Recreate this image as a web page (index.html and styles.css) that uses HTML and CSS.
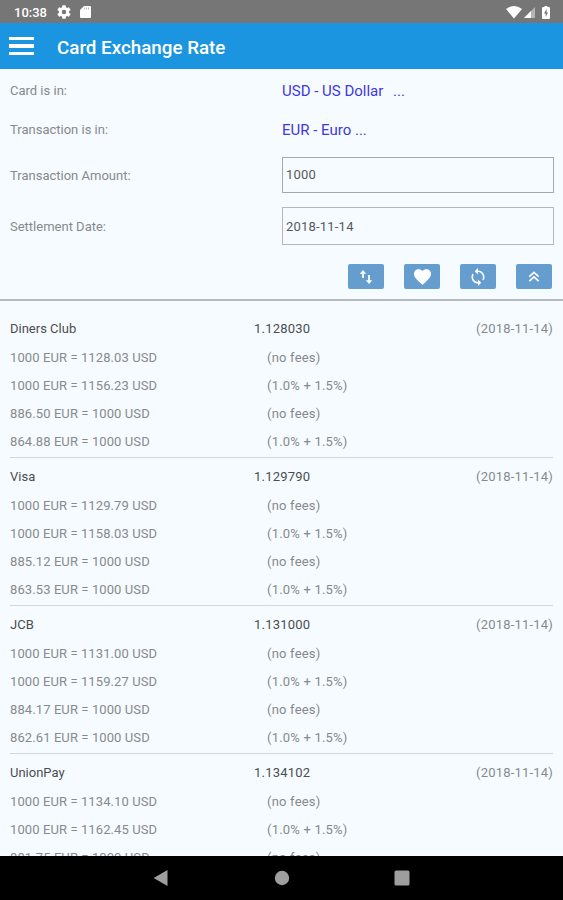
FILE: index.html
```
<!DOCTYPE html>
<html lang="en">
<head>
    <meta charset="UTF-8">
    <meta name="viewport" content="width=device-width, initial-scale=1.0">
    <title>Card Exchange Rate</title>
    <link rel="stylesheet" href="styles.css">
</head>
<body>
    <div class="status-bar">
        <span class="clock">10:38</span>
        <svg class="gear" width="14" height="14" viewBox="2 2 20 20"><path fill="#fff" d="M19.14 12.94c.04-.3.06-.61.06-.94s-.02-.64-.07-.94l2.03-1.58a.49.49 0 0 0 .12-.61l-1.92-3.32a.49.49 0 0 0-.59-.22l-2.39.96a7 7 0 0 0-1.62-.94l-.36-2.54A.48.48 0 0 0 13.92 2.4h-3.84a.48.48 0 0 0-.48.41l-.36 2.54a7 7 0 0 0-1.62.94l-2.39-.96a.49.49 0 0 0-.59.22L2.72 8.87a.48.48 0 0 0 .12.61l2.03 1.58a6 6 0 0 0 0 1.88l-2.03 1.58a.49.49 0 0 0-.12.61l1.92 3.32c.12.22.37.29.59.22l2.39-.96c.5.38 1.03.7 1.62.94l.36 2.54c.05.24.24.41.48.41h3.84c.24 0 .44-.17.48-.41l.36-2.54a7 7 0 0 0 1.62-.94l2.39.96c.22.08.47 0 .59-.22l1.92-3.32a.48.48 0 0 0-.12-.61zM12 15.1a3.1 3.1 0 1 1 0-6.2 3.1 3.1 0 0 1 0 6.2z"/></svg>
        <svg width="11" height="12" viewBox="0 0 11 12"><path fill="#fff" d="M4 0h6q1 0 1 1v10q0 1-1 1H1q-1 0-1-1V4z"/><path stroke="#aaa" stroke-width=".8" d="M4.5 1.5v2M6.5 1.5v2M8.5 1.5v2"/></svg>
        <div class="status-right">
            <svg width="16" height="13" viewBox="0 0 16 13"><path fill="#fff" d="M0 3Q8-3 16 3L8 12.5z"/></svg>
            <svg width="11" height="11" viewBox="0 0 11 11"><path fill="#b4b4b4" d="M0 11L11 0v11z"/><path fill="#fff" d="M0 11l7-7v7z"/></svg>
            <svg width="8" height="13" viewBox="0 0 8 13"><path fill="#fff" d="M2.5 0h3v1H7q1 0 1 1v10q0 1-1 1H1q-1 0-1-1V2q0-1 1-1h1.500z"/><path fill="#777" d="M4.600 3L2 7.500h1.600V11L6 6.500H4.600z"/></svg>
        </div>
    </div>

    <header class="app-bar">
        <button class="menu" aria-label="Menu"><span></span><span></span><span></span></button>
        <h1>Card Exchange Rate</h1>
    </header>

    <main class="content">
        <form class="settings">
            <div class="field">
                <label>Card is in:</label>
                <a class="currency">USD - US Dollar <span class="dots">...</span></a>
            </div>
            <div class="field">
                <label>Transaction is in:</label>
                <a class="currency">EUR - Euro ...</a>
            </div>
            <div class="field field-amount">
                <label for="amount">Transaction Amount:</label>
                <input id="amount" type="text" value="1000">
            </div>
            <div class="field field-date">
                <label for="date">Settlement Date:</label>
                <input id="date" type="text" value="2018-11-14">
            </div>
            <div class="actions">
                <button type="button" aria-label="Swap"><svg width="14" height="16" viewBox="0 0 14 16"><path fill="#fff" d="M4 1l3.200 3.700H4.900V9H3.100V4.700H.8zM10 15l-3.200-3.700h2.300V6h1.800v5.300h2.300z"/></svg></button>
                <button type="button" aria-label="Favorite"><svg width="17" height="16" viewBox="2 3 20 18.350"><path fill="#fff" d="M12 21.350l-1.450-1.320C5.400 15.360 2 12.280 2 8.500 2 5.420 4.420 3 7.500 3c1.740 0 3.410.81 4.500 2.090C13.090 3.810 14.760 3 16.500 3 19.580 3 22 5.420 22 8.500c0 3.780-3.400 6.860-8.550 11.540z"/></svg></button>
                <button type="button" aria-label="Refresh"><svg width="18" height="18" viewBox="1.500 1 21 22"><path fill="#fff" d="M12 4V1L8 5l4 4V6c3.310 0 6 2.690 6 6 0 1.010-.25 1.970-.7 2.800l1.460 1.460A7.930 7.930 0 0 0 20 12c0-4.420-3.580-8-8-8zm0 14c-3.310 0-6-2.690-6-6 0-1.010.25-1.970.7-2.800L5.240 7.740A7.930 7.930 0 0 0 4 12c0 4.420 3.580 8 8 8v3l4-4-4-4z"/></svg></button>
                <button type="button" aria-label="Collapse"><svg width="12" height="11" viewBox="0 0 12 11"><path fill="none" stroke="#fff" stroke-width="1.700" d="M1.300 5.700L6 1.400l4.700 4.300M1.300 10.200L6 5.900l4.700 4.300"/></svg></button>
            </div>
        </form>

        <section class="rates">
            <article class="rate">
                <div class="row head"><b>Diners Club</b><b class="value">1.128030</b><span class="date">(2018-11-14)</span></div>
                <div class="row"><span>1000 EUR = 1128.03 USD</span><span class="fee">(no fees)</span></div>
                <div class="row"><span>1000 EUR = 1156.23 USD</span><span class="fee">(1.0% + 1.5%)</span></div>
                <div class="row"><span>886.50 EUR = 1000 USD</span><span class="fee">(no fees)</span></div>
                <div class="row"><span>864.88 EUR = 1000 USD</span><span class="fee">(1.0% + 1.5%)</span></div>
            </article>
            <article class="rate">
                <div class="row head"><b>Visa</b><b class="value">1.129790</b><span class="date">(2018-11-14)</span></div>
                <div class="row"><span>1000 EUR = 1129.79 USD</span><span class="fee">(no fees)</span></div>
                <div class="row"><span>1000 EUR = 1158.03 USD</span><span class="fee">(1.0% + 1.5%)</span></div>
                <div class="row"><span>885.12 EUR = 1000 USD</span><span class="fee">(no fees)</span></div>
                <div class="row"><span>863.53 EUR = 1000 USD</span><span class="fee">(1.0% + 1.5%)</span></div>
            </article>
            <article class="rate">
                <div class="row head"><b>JCB</b><b class="value">1.131000</b><span class="date">(2018-11-14)</span></div>
                <div class="row"><span>1000 EUR = 1131.00 USD</span><span class="fee">(no fees)</span></div>
                <div class="row"><span>1000 EUR = 1159.27 USD</span><span class="fee">(1.0% + 1.5%)</span></div>
                <div class="row"><span>884.17 EUR = 1000 USD</span><span class="fee">(no fees)</span></div>
                <div class="row"><span>862.61 EUR = 1000 USD</span><span class="fee">(1.0% + 1.5%)</span></div>
            </article>
            <article class="rate">
                <div class="row head"><b>UnionPay</b><b class="value">1.134102</b><span class="date">(2018-11-14)</span></div>
                <div class="row"><span>1000 EUR = 1134.10 USD</span><span class="fee">(no fees)</span></div>
                <div class="row"><span>1000 EUR = 1162.45 USD</span><span class="fee">(1.0% + 1.5%)</span></div>
                <div class="row"><span>881.75 EUR = 1000 USD</span><span class="fee">(no fees)</span></div>
            </article>
        </section>
    </main>

    <nav class="nav-bar">
        <svg width="16" height="16" viewBox="0 0 16 16"><path fill="#9e9e9e" d="M13.500 0v16L-.5 8z"/></svg>
        <svg width="16" height="16" viewBox="0 0 16 16"><circle cx="8" cy="8" r="7.200" fill="#9e9e9e"/></svg>
        <svg width="16" height="16" viewBox="0 0 16 16"><rect x=".5" y=".5" width="15" height="15" rx="1.500" fill="#9e9e9e"/></svg>
    </nav>
</body>
</html>
```
FILE: styles.css
```
* {
    margin: 0;
    padding: 0;
    box-sizing: border-box;
}

body {
    height: 100vh;
    display: flex;
    flex-direction: column;
    overflow: hidden;
    background: #f6fbff;
    color: #868a8d;
    font-family: Roboto, sans-serif;
    font-size: 13px;
}

svg {
    display: block;
    flex-shrink: 0;
}

.status-bar {
    height: 23px;
    flex-shrink: 0;
    display: flex;
    align-items: center;
    padding: 1px 13px 0 14px;
    background: #767676;
    color: #fff;
}

.clock {
    width: 43px;
    font-weight: 500;
}

.gear {
    margin-right: 9px;
}

.status-right {
    margin-left: auto;
    display: flex;
    align-items: center;
    gap: 2px;
}

.status-right svg:last-child {
    margin-left: 5px;
}

.app-bar {
    height: 46px;
    flex-shrink: 0;
    display: flex;
    align-items: center;
    padding-left: 9px;
    background: #1b95df;
    color: #fff;
}

.app-bar h1 {
    margin-left: 23px;
    padding-top: 3px;
    font-size: 18.800px;
    font-weight: 500;
}

.menu {
    width: 25px;
    display: flex;
    flex-direction: column;
    gap: 4px;
    border: 0;
    background: none;
}

.menu span {
    height: 3.500px;
    background: #fff;
}

.content {
    flex: 1;
    min-height: 0;
    overflow: hidden;
}

.settings {
    height: 232px;
    padding: 2px 10px 0;
    border-bottom: 2px solid #b7babd;
}

.field {
    height: 39px;
    display: grid;
    grid-template-columns: 271px 1fr;
    align-items: center;
}

.field-amount {
    height: 52px;
}

.field-date {
    height: 50px;
}

.currency {
    padding-left: 1px;
    font-size: 15px;
    color: #4038dc;
}

.dots {
    margin-left: 6px;
}

.field input {
    width: 272px;
    height: 36px;
    margin-left: 1px;
    padding: 0 3px 2px;
    border: 1px solid #a5a8aa;
    background: transparent;
    color: #56595b;
    font: inherit;
    letter-spacing: 0.200px;
}

.field-date input {
    height: 38px;
    padding-bottom: 0;
    border-color: #b5b8ba;
}

.actions {
    display: flex;
    justify-content: flex-end;
    gap: 20px;
    padding: 13px 1px 0 0;
}

.actions button {
    width: 36px;
    height: 25px;
    display: flex;
    align-items: center;
    justify-content: center;
    border: 0;
    border-radius: 2px;
    background: #659dce;
}

.rates {
    padding: 9px 10px 0;
}

.rate {
    height: 148px;
    padding-top: 4px;
    border-bottom: 1px solid #d3d7da;
}

.row {
    height: 28.100px;
    display: grid;
    grid-template-columns: 244px 1fr auto;
    align-items: center;
    letter-spacing: 0.100px;
}

.row b {
    color: #4b4e50;
    font-weight: 400;
    letter-spacing: 0;
}

.row .value,
.row .date,
.row .fee {
    letter-spacing: 0.200px;
}

/* lines below the heading sit slightly lower */
.head {
    height: 29px;
}

.fee {
    padding-left: 13px;
}

.nav-bar {
    height: 44px;
    flex-shrink: 0;
    display: flex;
    align-items: center;
    justify-content: center;
    gap: 104px;
    background: #000;
}
```
